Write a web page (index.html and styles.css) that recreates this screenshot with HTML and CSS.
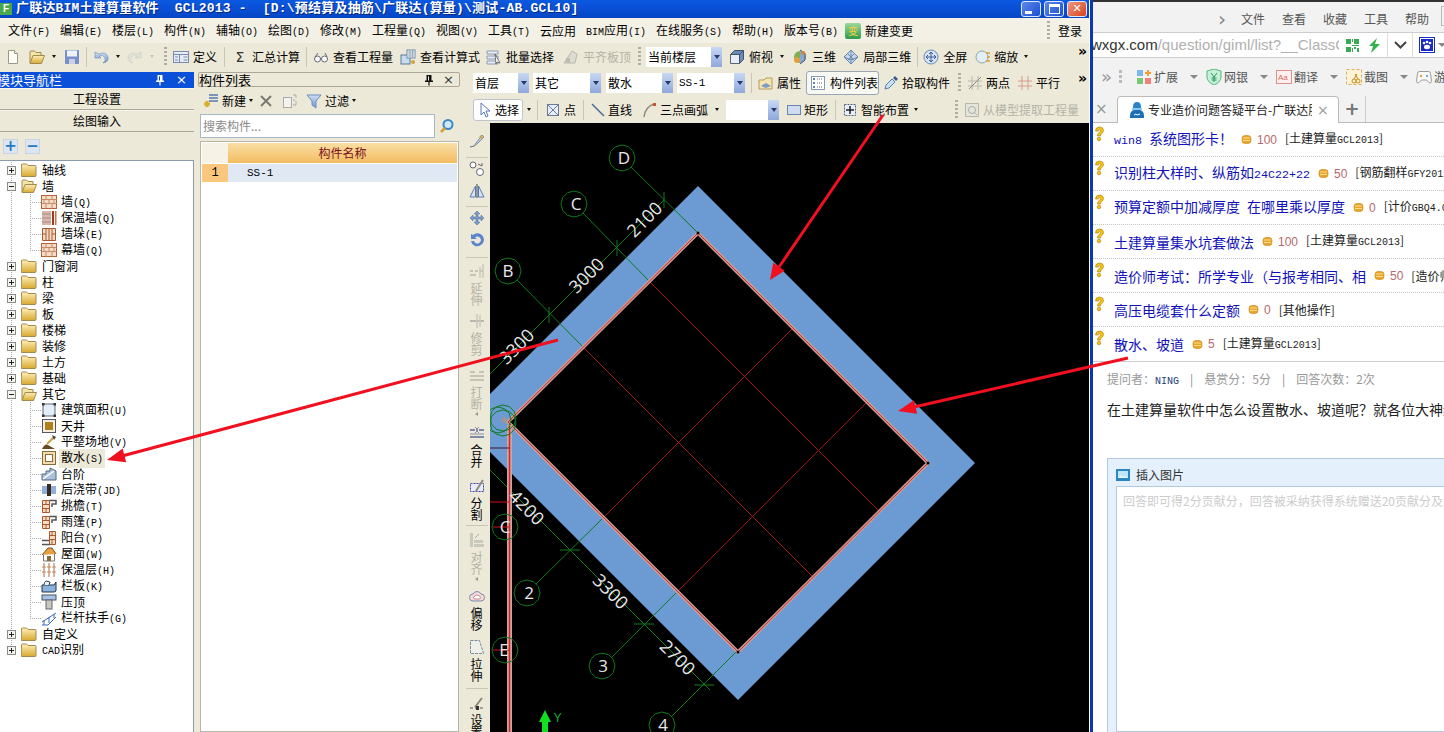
FILE: index.html
```html
<!DOCTYPE html>
<html lang="zh">
<head>
<meta charset="utf-8">
<title>广联达BIM土建算量软件</title>
<link rel="stylesheet" href="styles.css">
</head>
<body>
<svg class="defs" aria-hidden="true">
  <defs>
    <linearGradient id="gf" x1="0" y1="0" x2="0" y2="1"><stop offset="0" stop-color="#fdf0b8"/><stop offset="1" stop-color="#d9a830"/></linearGradient>
    <linearGradient id="gb" x1="0" y1="0" x2="0" y2="1"><stop offset="0" stop-color="#cfe0f5"/><stop offset="1" stop-color="#6f94cc"/></linearGradient>
    <symbol id="pinic" viewBox="0 0 10 12"><path d="M2.500 1h5v5.500H9V8H5.600v3.500H4.400V8H1V6.500h1.500zM4 2.200v4.300h1V2.200z" fill="currentColor" fill-rule="evenodd"/></symbol>
    <symbol id="plus" viewBox="0 0 9 9"><rect x=".5" y=".5" width="8" height="8" fill="#f4f4ee" stroke="#8a8a8a"/><path d="M2 4.500h5M4.500 2v5" stroke="#222"/></symbol>
    <symbol id="minus" viewBox="0 0 9 9"><rect x=".5" y=".5" width="8" height="8" fill="#f4f4ee" stroke="#8a8a8a"/><path d="M2 4.500h5" stroke="#222"/></symbol>
    <symbol id="folder" viewBox="0 0 16 16"><path d="M.5 4.500V3q0-1 1-1h4l1.500 1.500h7q1 0 1 1v9q0 1-1 1h-13q-1 0-1-1z" fill="url(#gf)" stroke="#a08a50"/></symbol>
    <symbol id="folderopen" viewBox="0 0 16 16"><path d="M1 14V3q0-1 1-1h3.500L7 3.500h5V6" fill="#f4e4a8" stroke="#a08a50"/><path d="M1 14.500 4 6.500h11.500L12.500 14.500z" fill="url(#gf)" stroke="#a08a50"/></symbol>
    <symbol id="brick" viewBox="0 0 16 16"><rect x=".5" y="1.500" width="15" height="13" fill="#f6dcc6" stroke="#b5613a"/><path d="M.5 5.500h15M.5 9.500h15M5 1.500v4M11 1.500v4M8 5.500v4M3 5.500v4M13 5.500v4M5 9.500v5M11 9.500v5" stroke="#c98a68" fill="none"/></symbol>
    <symbol id="insul" viewBox="0 0 16 16"><rect x="1" y="1" width="9" height="14" fill="#d8b8a8"/><path d="M1 4h9M1 8h9M1 12h9" stroke="#a88" /><rect x="11" y="1" width="2" height="14" fill="#a03820"/><rect x="14" y="1" width="1.500" height="14" fill="#d07040"/></symbol>
    <symbol id="pier" viewBox="0 0 16 16"><path d="M1.500 2.500h13v12h-13z" fill="#f6dcc6" stroke="#a8582e"/><path d="M5 2.500v12M11 2.500v12M8 2.500v12M1.500 8h3.500M11 8h3.500" stroke="#a8582e" fill="none"/></symbol>
    <symbol id="area" viewBox="0 0 16 16"><rect x="2" y="2" width="12" height="12" fill="#e4eef8" stroke="#667"/><rect x="1" y="1" width="2.500" height="2.500" fill="#333"/><rect x="12.500" y="1" width="2.500" height="2.500" fill="#333"/><rect x="1" y="12.500" width="2.500" height="2.500" fill="#333"/><rect x="12.500" y="12.500" width="2.500" height="2.500" fill="#333"/></symbol>
    <symbol id="well" viewBox="0 0 16 16"><rect x="1.500" y="1.500" width="13" height="13" fill="#f4eedc" stroke="#556"/><rect x="4" y="4" width="8" height="8" fill="#b08020"/></symbol>
    <symbol id="level" viewBox="0 0 16 16"><path d="M1 15q3-6 6-4l7 4z" fill="#6a4a24"/><path d="M6 10 13 3" stroke="#c8a040" stroke-width="2"/><path d="M11 1l4 2-2 3z" fill="#444"/></symbol>
    <symbol id="apron" viewBox="0 0 16 16"><rect x="1.500" y="1.500" width="13" height="13" fill="#f2dcae" stroke="#8a6a3a"/><rect x="4.500" y="4.500" width="7" height="7" fill="#fff" stroke="#8a6a3a"/></symbol>
    <symbol id="steps" viewBox="0 0 16 16"><path d="M1 14V8h4V5h4V2l6 3v9z" fill="#a9c0de" stroke="#567"/><path d="M2 13 13 5" stroke="#fff" stroke-width="1.500"/></symbol>
    <symbol id="band" viewBox="0 0 16 16"><rect x="1" y="4" width="5" height="8" fill="#8fb0dc"/><rect x="10" y="4" width="5" height="8" fill="#8fb0dc"/><rect x="6" y="2" width="4" height="12" fill="#3a2a20"/></symbol>
    <symbol id="eave" viewBox="0 0 16 16"><path d="M1.500 2.500h7v12h-7z" fill="#f6dcc6" stroke="#a8582e"/><path d="M1.500 6.500h7M1.500 10.500h7M5 2.500v4M5 10.500v4" stroke="#a8582e"/><path d="M8.500 2.500H15V6H11v3" fill="none" stroke="#555" stroke-width="1.500"/></symbol>
    <symbol id="balcony" viewBox="0 0 16 16"><path d="M8.500 1.500h6v13h-6z" fill="#f6dcc6" stroke="#a8582e"/><path d="M8.500 5.500h6M8.500 9.500h6M11 1.500v4M11 9.500v5" stroke="#a8582e"/><path d="M1 14.500h8M1 10.500h7" stroke="#555" stroke-width="1.500"/></symbol>
    <symbol id="roof" viewBox="0 0 16 16"><path d="M2.500 8v7h11V8" fill="#fff" stroke="#777"/><path d="M1 9 7 2h4l4 6" fill="#e8a040" stroke="#7a5020"/><rect x="6" y="10" width="4" height="5" fill="#8a6a3a"/></symbol>
    <symbol id="layer" viewBox="0 0 16 16"><path d="M3 1v14M8 1v14M13 1v14" stroke="#b06a40"/><path d="M1 5h4M6 5h4M11 5h4M1 10h4M6 10h4M11 10h4" stroke="#c88a5a"/></symbol>
    <symbol id="board" viewBox="0 0 16 16"><path d="M1 7h12l2-3v8q0 2-2 2H1z" fill="#8ab4de" stroke="#234"/><path d="M3 7q0-3 2-4l4 1-1 3" fill="#e8f2fa" stroke="#345"/></symbol>
    <symbol id="coping" viewBox="0 0 16 16"><rect x="1" y="1" width="14" height="5" fill="#a8c4e4" stroke="#456"/><rect x="5" y="6" width="6" height="9" fill="#c8c8c0" stroke="#667"/></symbol>
    <symbol id="rail" viewBox="0 0 16 16"><path d="M1 12 15 3M1 15h6l8-8M3 10v5M8 7v6M13 4v4" fill="none" stroke="#3a6ab8"/></symbol>
    <symbol id="newdoc" viewBox="0 0 16 16"><path d="M3.500 1.500h6l3 3v10h-9z" fill="#fffef6" stroke="#9a9a8c"/><path d="M9.500 1.500v3h3" fill="#eee" stroke="#9a9a8c"/></symbol>
    <symbol id="save" viewBox="0 0 16 16"><rect x="1" y="1" width="14" height="14" rx="1" fill="#7a8fc8"/><rect x="3" y="1.500" width="10" height="6" fill="#eef2fa"/><rect x="5" y="10" width="6" height="5" fill="#c8d0e4"/></symbol>
    <symbol id="undo" viewBox="0 0 16 16"><path d="M2 3v6h6L6 7q4-2 6 2 1 3-2 5 6-1 5-6-2-6-9-3z" fill="url(#gb)" stroke="#5a7ab0" stroke-width=".5"/></symbol>
    <symbol id="redo" viewBox="0 0 16 16"><path d="M14 3v6H8l2-2q-4-2-6 2-1 3 2 5-6-1-5-6 2-6 9-3z" fill="#dfe0d8" stroke="#c8c8bc" stroke-width=".5"/></symbol>
    <symbol id="table" viewBox="0 0 16 16"><rect x=".5" y="2.500" width="15" height="11" fill="#e4ecf8" stroke="#7a8ca8"/><path d="M.5 5.500h15M6.500 5.500v8M10.500 8h4M10.500 11h4M2 8h3M2 11h3" stroke="#7a8ca8"/></symbol>
    <symbol id="glasses" viewBox="0 0 16 16"><circle cx="4.500" cy="10" r="3" fill="#fff" stroke="#667"/><circle cx="11.500" cy="10" r="3" fill="#fff" stroke="#667"/><path d="M7.500 10h1M2 8l3-4M14 8l-2-4" stroke="#667" fill="none"/></symbol>
    <symbol id="calc" viewBox="0 0 16 16"><rect x="1" y="6" width="9" height="9" fill="#c8dcf0" stroke="#5a7a9a"/><rect x="7" y="1" width="8" height="8" fill="#fff" stroke="#6a8aa8"/><path d="M8 3h6M8 5h6M8 7h6M10 1v8M12.500 1v8" stroke="#9ab"/><circle cx="13" cy="13" r="2" fill="#d8a040"/></symbol>
    <symbol id="batch" viewBox="0 0 16 16"><path d="M1 2h11v3H1zM1 7h11v3H1zM1 12h11v3H1z" fill="#e8eef6" stroke="#8a9ab8"/><path d="M9 5l5 9-3-1-1 2z" fill="#fff" stroke="#444" stroke-width=".7"/></symbol>
    <symbol id="align" viewBox="0 0 16 16"><path d="M1 14 9 2l5 3-2 9z" fill="#dcdcd2" stroke="#b8b8ac"/><rect x="3" y="9" width="4" height="5" fill="#bcbcb0"/></symbol>
    <symbol id="cube" viewBox="0 0 16 16"><path d="M1.500 5.500h9v9h-9z" fill="#e8eef6" stroke="#567"/><path d="M1.500 5.500l4-4h9l-4 4zM10.500 5.500l4-4v9l-4 4z" fill="#6a8abc" stroke="#456"/></symbol>
    <symbol id="d3" viewBox="0 0 16 16"><circle cx="8" cy="8" r="6" fill="#7ab050"/><path d="M8 1l5 3v7l-5 4" fill="#88a8d8" stroke="#557"/><circle cx="5" cy="11" r="3" fill="#e0a040"/><circle cx="11" cy="4" r="2" fill="#c84"/></symbol>
    <symbol id="local3" viewBox="0 0 16 16"><path d="M8 1l7 7-7 7-7-7z" fill="#c8d8ec" stroke="#68a"/><path d="M1 8l7 3 7-3M8 1v14M4 4l7 7M12 4l-7 7" stroke="#68a" fill="none"/></symbol>
    <symbol id="full" viewBox="0 0 16 16"><circle cx="8" cy="8" r="7" fill="#d8e4f4" stroke="#6a8ab8"/><path d="M8 3v10M3 8h10M8 3l-2 2M8 3l2 2M8 13l-2-2M8 13l2-2M3 8l2-2M3 8l2 2M13 8l-2-2M13 8l-2 2" stroke="#3a5a98" fill="none"/></symbol>
    <symbol id="zoom" viewBox="0 0 16 16"><circle cx="7" cy="8" r="6" fill="#e4eef8" stroke="#8aa"/><path d="M11 4h4M12 8h3M11 12h4" stroke="#d8a030" stroke-width="1.500"/></symbol>
    <symbol id="prop" viewBox="0 0 16 16"><path d="M1 14V5h5l2-2h6v11z" fill="#f4e4b0" stroke="#b89a5a"/><path d="M3 11l5-3 5 3-5 2z" fill="#7a9ac8"/></symbol>
    <symbol id="listic" viewBox="0 0 16 16"><rect x="1.500" y="1.500" width="13" height="13" fill="#fff" stroke="#8a9ab0"/><path d="M3 4h2M3 8h2M3 12h2" stroke="#2a5aa8" stroke-width="1.500"/><path d="M7 4h6M7 8h6M7 12h6" stroke="#667" stroke-dasharray="1 1"/></symbol>
    <symbol id="dropper" viewBox="0 0 16 16"><path d="M2 14l1-4 6-6 3 3-6 6z" fill="#c8e0f4" stroke="#5a80b0"/><path d="M10 3l2-2 3 3-2 2z" fill="#3a5a90"/></symbol>
    <symbol id="twopt" viewBox="0 0 16 16"><path d="M5 1v14M11 1v14M1 6h14M1 11h14" stroke="#b8b8ac"/><path d="M2 14 14 2" stroke="#8a8a80"/></symbol>
    <symbol id="para" viewBox="0 0 16 16"><path d="M5 1v14M11 1v14M1 6h14M1 11h14" stroke="#d89a8a"/></symbol>
    <symbol id="cursor" viewBox="0 0 16 16"><path d="M5 1v12l3-3 2 5 2-1-2-5h4z" fill="#fff" stroke="#5a7ab8"/></symbol>
    <symbol id="pt" viewBox="0 0 16 16"><rect x="2.500" y="2.500" width="11" height="11" fill="#e8eef8" stroke="#6a7a98"/><path d="M2.500 2.500l11 11M13.500 2.500l-11 11" stroke="#6a7a98"/></symbol>
    <symbol id="line" viewBox="0 0 16 16"><path d="M2 2l12 12" stroke="#4a6a98" stroke-width="1.500"/></symbol>
    <symbol id="arc" viewBox="0 0 16 16"><path d="M3 15Q4 5 13 2" fill="none" stroke="#8a8a80" stroke-width="1.500"/><rect x="12" y="1" width="3" height="3" fill="#d05030"/></symbol>
    <symbol id="rect" viewBox="0 0 16 16"><rect x="1.500" y="3.500" width="13" height="9" fill="#cfdcf0" stroke="#6a86b0"/></symbol>
    <symbol id="smart" viewBox="0 0 16 16"><rect x="2.500" y="2.500" width="11" height="11" fill="#e8eef8" stroke="#567" stroke-dasharray="2 1"/><path d="M8 4v8M4 8h8" stroke="#222" stroke-width="1.500"/></symbol>
    <symbol id="extract" viewBox="0 0 16 16"><rect x="1.500" y="1.500" width="13" height="13" fill="#e4e4da" stroke="#b8b8ac"/><circle cx="8" cy="8" r="3.500" fill="none" stroke="#aaa"/><path d="M10 10l3 3" stroke="#aaa"/></symbol>
    <symbol id="newitem" viewBox="0 0 16 16"><path d="M6 2h9M6 5h9M6 8h9" stroke="#5a7ab0" stroke-width="1.500"/><path d="M4 8v6M1 11h6" stroke="#d8b030" stroke-width="3"/></symbol>
    <symbol id="del" viewBox="0 0 16 16"><path d="M3 3l10 10M13 3 3 13" stroke="#7a7a70" stroke-width="2"/></symbol>
    <symbol id="copy" viewBox="0 0 16 16"><rect x="1.500" y="4.500" width="8" height="10" fill="#f4f4ec" stroke="#aaa"/><path d="M11 2h3v3M11 12h3V8M11 7h2" fill="none" stroke="#aaa"/></symbol>
    <symbol id="filter" viewBox="0 0 16 16"><path d="M1 2h14l-5 6v7l-4-3V8z" fill="url(#gb)" stroke="#6a90c0"/></symbol>
    <symbol id="search" viewBox="0 0 16 16"><circle cx="9" cy="6.500" r="4.500" fill="#cfe8f8" stroke="#3a88c8" stroke-width="2"/><path d="M6 10l-4 4" stroke="#d8a030" stroke-width="2.500"/></symbol>
    <symbol id="brush" viewBox="0 0 16 16"><path d="M1 14q5 0 6-4l6-8 2 2-7 7q-3 3-7 3z" fill="#b8c8e0" stroke="#567" stroke-width=".6"/><path d="M11 3l2 2" stroke="#d8a030" stroke-width="2"/></symbol>
    <symbol id="copymove" viewBox="0 0 16 16"><circle cx="4" cy="4" r="3" fill="#fff" stroke="#667"/><circle cx="11" cy="11" r="3.500" fill="#fff" stroke="#667"/><path d="M9 3l4 2M13 2v3" stroke="#667" fill="none"/></symbol>
    <symbol id="mirror" viewBox="0 0 16 16"><path d="M8 1v14" stroke="#345"/><path d="M6.500 3v11H1zM9.500 3v11H15z" fill="#d8e4f4" stroke="#5a7ab0"/></symbol>
    <symbol id="move" viewBox="0 0 16 16"><path d="M8 1l3 3H9v3h3V5l3 3-3 3V9H9v3h2l-3 3-3-3h2V9H4v2L1 8l3-3v2h3V4H5z" fill="#7a9ac8" stroke="#4a6a98" stroke-width=".5"/></symbol>
    <symbol id="rotate" viewBox="0 0 16 16"><path d="M4 2a6.500 6.500 0 1 1-2 6h3a3.500 3.500 0 1 0 1-3.500L8 6H2V1z" fill="#5a84cc"/></symbol>
    <symbol id="extend" viewBox="0 0 16 16"><path d="M1 8h3M6 8h3M11 8h3M1 12h6" stroke="#b8b8ac" stroke-width="1.500"/><path d="M14 1v14M11 4v11" stroke="#c8c8bc" stroke-width="1.500"/></symbol>
    <symbol id="trim" viewBox="0 0 16 16"><path d="M1 8h14" stroke="#b8b8ac" stroke-width="2"/><path d="M8 1v14M11 2v12" stroke="#c8c8bc" stroke-width="1.500"/></symbol>
    <symbol id="breakic" viewBox="0 0 16 16"><path d="M1 5h5M10 5h5M1 13h14M1 9h14" stroke="#b8b8ac" stroke-width="1.500"/></symbol>
    <symbol id="merge" viewBox="0 0 16 16"><path d="M1 5h5M10 5h5M1 12h14" stroke="#5a6a98" stroke-width="1.500"/><path d="M6 2l3 3-3 3M10 2 7 5l3 3" stroke="#88a" fill="none"/><path d="M1 9h14" stroke="#aab" stroke-width="1.500"/></symbol>
    <symbol id="split" viewBox="0 0 16 16"><rect x="1.500" y="5.500" width="13" height="8" fill="#e8ecf8" stroke="#4040b0" stroke-dasharray="2 1"/><path d="M7 13 14 2" stroke="#8a8a80" stroke-width="2"/></symbol>
    <symbol id="alignv" viewBox="0 0 16 16"><rect x="1" y="1" width="3" height="14" fill="#c8c8bc"/><rect x="5" y="8" width="9" height="3" fill="#c8c8bc"/><rect x="5" y="12" width="10" height="3" fill="#c8c8bc"/><path d="M10 2 6 6" stroke="#aaa"/></symbol>
    <symbol id="offset" viewBox="0 0 16 16"><path d="M4 13a3.500 3.500 0 0 1 0-7 4.500 4.500 0 0 1 8 0 3.500 3.500 0 0 1 0 7z" fill="#f4dcdc" stroke="#7a8ab0"/><path d="M6 11a1.500 1.500 0 0 1 0-3 2.500 2.500 0 0 1 4 0 1.500 1.500 0 0 1 0 3z" fill="#fff" stroke="#c88"/></symbol>
    <symbol id="stretch" viewBox="0 0 16 16"><path d="M1.500 1.500h9l4 13h-13z" fill="#f0f0ea" stroke="#7a8a98" stroke-dasharray="3 1"/></symbol>
    <symbol id="setting" viewBox="0 0 16 16"><path d="M1 13h14" stroke="#555" stroke-dasharray="3 2"/><path d="M6 12 13 3" stroke="#8a8a80" stroke-width="2"/><rect x="7" y="11" width="3" height="4" fill="#333"/></symbol>
    <symbol id="qmark" viewBox="0 0 11 16"><path d="M1.500 5Q1.500 1 5.500 1t4 3.500q0 2-2 3.200-1 .8-1 2.300H3.500q0-2.300 1.600-3.500 1.300-1 1.300-2 0-1.200-1-1.200T4.500 5z" fill="#f2c414" stroke="#a87a08" stroke-width=".6"/><circle cx="5" cy="13" r="1.800" fill="#f2c414" stroke="#a87a08" stroke-width=".6"/></symbol>
    <symbol id="coin" viewBox="0 0 11 11"><rect x="1" y="1.500" width="9" height="8" rx="3" fill="#e8a52a" stroke="#c8861a" stroke-width=".6"/><path d="M2 4h7M2 6.500h7" stroke="#ffe090"/></symbol>
  </defs>
</svg>

<div class="desk">
  <section class="app">
    <header class="title">
      <span class="applogo">F</span>
      <h1 class="title-text">广联达BIM土建算量软件  GCL2013 -  [D:\预结算及抽筋\广联达(算量)\测试-AB.GCL10]</h1>
      <div class="winbtns">
        <span class="wb"><i class="wb-min"></i></span>
        <span class="wb"><i class="wb-max"></i></span>
        <span class="wb wb-close">✕</span>
      </div>
    </header>

    <nav class="menubar">
      <span>文件<span class="m">(F)</span></span>
      <span>编辑<span class="m">(E)</span></span>
      <span>楼层<span class="m">(L)</span></span>
      <span>构件<span class="m">(N)</span></span>
      <span>辅轴<span class="m">(O)</span></span>
      <span>绘图<span class="m">(D)</span></span>
      <span>修改<span class="m">(M)</span></span>
      <span>工程量<span class="m">(Q)</span></span>
      <span>视图<span class="m">(V)</span></span>
      <span>工具<span class="m">(T)</span></span>
      <span>云应用</span>
      <span><span class="m">BIM</span>应用<span class="m">(I)</span></span>
      <span>在线服务<span class="m">(S)</span></span>
      <span>帮助<span class="m">(H)</span></span>
      <span>版本号<span class="m">(B)</span></span>
      <span class="change"><span class="changeic">变</span>新建变更</span>
      <span class="menu-end"><i class="grip"></i>登录</span>
    </nav>

    <div class="tb tb-main">
      <svg class="ic"><use href="#newdoc"/></svg>
      <svg class="ic ml8"><use href="#folderopen"/></svg>
      <i class="caret ml7"></i>
      <svg class="ic ml8"><use href="#save"/></svg>
      <i class="sep ml6"></i>
      <svg class="ic ml6"><use href="#undo"/></svg>
      <i class="caret ml7"></i>
      <svg class="ic ml7"><use href="#redo"/></svg>
      <i class="caret off ml7"></i>
      <i class="grip ml10"></i>
      <span class="ti g4 ml6"><svg class="ic"><use href="#table"/></svg>定义</span>
      <i class="sep ml7"></i>
      <span class="ti g4 ml7"><b class="sigma">Σ</b>汇总计算</span>
      <i class="sep ml6"></i>
      <span class="ti g4 ml6"><svg class="ic"><use href="#glasses"/></svg>查看工程量</span>
      <span class="ti g4 ml7"><svg class="ic"><use href="#calc"/></svg>查看计算式</span>
      <span class="ti g4 ml6"><svg class="ic"><use href="#batch"/></svg>批量选择</span>
      <span class="ti g4 ml9 dis"><svg class="ic"><use href="#align"/></svg>平齐板顶</span>
      <i class="grip ml7"></i>
      <span class="combo ml5 w76">当前楼层</span>
      <span class="ti g4 ml7"><svg class="ic"><use href="#cube"/></svg>俯视</span>
      <i class="caret ml7"></i>
      <span class="ti g4 ml8"><svg class="ic"><use href="#d3"/></svg>三维</span>
      <span class="ti g4 ml7"><svg class="ic"><use href="#local3"/></svg>局部三维</span>
      <i class="sep ml6"></i>
      <span class="ti g4 ml5"><svg class="ic"><use href="#full"/></svg>全屏</span>
      <span class="ti g3 ml8"><svg class="ic"><use href="#zoom"/></svg>缩放</span>
      <i class="caret ml6"></i>
      <b class="more">»</b>
    </div>

    <div class="work">
      <aside class="nav">
        <div class="nav-title"><span class="nav-name">模块导航栏</span><svg class="pin"><use href="#pinic"/></svg><span class="cl">×</span></div>
        <button class="navbtn">工程设置</button>
        <button class="navbtn">绘图输入</button>
        <div class="nav-tools"><span class="sq">+</span><span class="sq">−</span></div>
        <div class="tree">
          <div class="node"><svg class="exp"><use href="#plus"/></svg><svg class="ic"><use href="#folder"/></svg><span>轴线</span></div>
          <div class="node"><svg class="exp"><use href="#minus"/></svg><svg class="ic"><use href="#folderopen"/></svg><span>墙</span></div>
          <div class="node child"><svg class="ic"><use href="#brick"/></svg><span>墙<span class="m">(Q)</span></span></div>
          <div class="node child"><svg class="ic"><use href="#insul"/></svg><span>保温墙<span class="m">(Q)</span></span></div>
          <div class="node child"><svg class="ic"><use href="#pier"/></svg><span>墙垛<span class="m">(E)</span></span></div>
          <div class="node child lastc"><svg class="ic"><use href="#brick"/></svg><span>幕墙<span class="m">(Q)</span></span></div>
          <div class="node"><svg class="exp"><use href="#plus"/></svg><svg class="ic"><use href="#folder"/></svg><span>门窗洞</span></div>
          <div class="node"><svg class="exp"><use href="#plus"/></svg><svg class="ic"><use href="#folder"/></svg><span>柱</span></div>
          <div class="node"><svg class="exp"><use href="#plus"/></svg><svg class="ic"><use href="#folder"/></svg><span>梁</span></div>
          <div class="node"><svg class="exp"><use href="#plus"/></svg><svg class="ic"><use href="#folder"/></svg><span>板</span></div>
          <div class="node"><svg class="exp"><use href="#plus"/></svg><svg class="ic"><use href="#folder"/></svg><span>楼梯</span></div>
          <div class="node"><svg class="exp"><use href="#plus"/></svg><svg class="ic"><use href="#folder"/></svg><span>装修</span></div>
          <div class="node"><svg class="exp"><use href="#plus"/></svg><svg class="ic"><use href="#folder"/></svg><span>土方</span></div>
          <div class="node"><svg class="exp"><use href="#plus"/></svg><svg class="ic"><use href="#folder"/></svg><span>基础</span></div>
          <div class="node"><svg class="exp"><use href="#minus"/></svg><svg class="ic"><use href="#folderopen"/></svg><span>其它</span></div>
          <div class="node child"><svg class="ic"><use href="#area"/></svg><span>建筑面积<span class="m">(U)</span></span></div>
          <div class="node child"><svg class="ic"><use href="#well"/></svg><span>天井</span></div>
          <div class="node child"><svg class="ic"><use href="#level"/></svg><span>平整场地<span class="m">(V)</span></span></div>
          <div class="node child sel"><svg class="ic"><use href="#apron"/></svg><span>散水<span class="m">(S)</span></span></div>
          <div class="node child"><svg class="ic"><use href="#steps"/></svg><span>台阶</span></div>
          <div class="node child"><svg class="ic"><use href="#band"/></svg><span>后浇带<span class="m">(JD)</span></span></div>
          <div class="node child"><svg class="ic"><use href="#eave"/></svg><span>挑檐<span class="m">(T)</span></span></div>
          <div class="node child"><svg class="ic"><use href="#eave"/></svg><span>雨篷<span class="m">(P)</span></span></div>
          <div class="node child"><svg class="ic"><use href="#balcony"/></svg><span>阳台<span class="m">(Y)</span></span></div>
          <div class="node child"><svg class="ic"><use href="#roof"/></svg><span>屋面<span class="m">(W)</span></span></div>
          <div class="node child"><svg class="ic"><use href="#layer"/></svg><span>保温层<span class="m">(H)</span></span></div>
          <div class="node child"><svg class="ic"><use href="#board"/></svg><span>栏板<span class="m">(K)</span></span></div>
          <div class="node child"><svg class="ic"><use href="#coping"/></svg><span>压顶</span></div>
          <div class="node child lastc"><svg class="ic"><use href="#rail"/></svg><span>栏杆扶手<span class="m">(G)</span></span></div>
          <div class="node"><svg class="exp"><use href="#plus"/></svg><svg class="ic"><use href="#folder"/></svg><span>自定义</span></div>
          <div class="node lastr"><svg class="exp"><use href="#plus"/></svg><svg class="ic"><use href="#folder"/></svg><span><span class="m">CAD</span>识别</span></div>
        </div>
      </aside>

      <aside class="list">
        <div class="list-title"><span class="list-name">构件列表</span><svg class="pin dark"><use href="#pinic"/></svg><span class="cl dark">×</span></div>
        <div class="list-tools">
          <span class="ti"><svg class="ic"><use href="#newitem"/></svg>新建</span><i class="caret ml3"></i>
          <svg class="ic ml5"><use href="#del"/></svg>
          <svg class="ic ml8"><use href="#copy"/></svg>
          <span class="ti ml8"><svg class="ic"><use href="#filter"/></svg>过滤</span><i class="caret ml3"></i>
        </div>
        <div class="searchrow"><div class="searchbox">搜索构件...</div><svg class="ic searchic"><use href="#search"/></svg></div>
        <div class="grid">
          <div class="gh"><span class="gn"></span><span class="gt">构件名称</span></div>
          <div class="gr"><span class="gn gnum">1</span><span class="gc">SS-1</span></div>
        </div>
      </aside>

      <main class="draw">
        <div class="tb tb3">
          <span class="combo w56">首层</span>
          <span class="combo ml4 w68">其它</span>
          <span class="combo ml5 w67">散水</span>
          <span class="combo ml4 w68 mono">SS-1</span>
          <i class="sep ml6"></i>
          <span class="ti ml6"><svg class="ic"><use href="#prop"/></svg>属性</span>
          <span class="ti toggled ml5"><svg class="ic"><use href="#listic"/></svg>构件列表</span>
          <span class="ti ml4"><svg class="ic"><use href="#dropper"/></svg>拾取构件</span>
          <i class="grip ml8"></i>
          <span class="ti ml6"><svg class="ic"><use href="#twopt"/></svg>两点</span>
          <span class="ti ml7"><svg class="ic"><use href="#para"/></svg>平行</span>
          <b class="more">»</b>
        </div>
        <div class="tb tb4">
          <span class="ti selbtn"><svg class="ic"><use href="#cursor"/></svg>选择</span>
          <i class="caret ml4"></i>
          <i class="sep ml6"></i>
          <span class="ti ml7"><svg class="ic"><use href="#pt"/></svg>点</span>
          <i class="sep ml7"></i>
          <span class="ti g2 ml6"><svg class="ic"><use href="#line"/></svg>直线</span>
          <span class="ti ml9"><svg class="ic"><use href="#arc"/></svg>三点画弧</span>
          <i class="caret ml7"></i>
          <span class="combo ml7 w53"></span>
          <span class="ti g2 ml7"><svg class="ic"><use href="#rect"/></svg>矩形</span>
          <i class="sep ml7"></i>
          <span class="ti ml6"><svg class="ic"><use href="#smart"/></svg>智能布置</span>
          <i class="caret ml5"></i>
          <i class="grip ml37"></i>
          <span class="ti ml6 dis"><svg class="ic"><use href="#extract"/></svg>从模型提取工程量</span>
        </div>
        <div class="stage">
          <div class="vbar">
            <svg class="ic"><use href="#brush"/></svg>
            <i class="hsep mt8"></i>
            <svg class="ic mt3"><use href="#copymove"/></svg>
            <svg class="ic mt6"><use href="#mirror"/></svg>
            <i class="hsep mt7"></i>
            <svg class="ic mt3"><use href="#move"/></svg>
            <svg class="ic mt7"><use href="#rotate"/></svg>
            <i class="hsep mt8"></i>
            <span class="vt dis mt5"><svg class="ic"><use href="#extend"/></svg>延伸</span>
            <span class="vt dis mt7"><svg class="ic"><use href="#trim"/></svg>修剪</span>
            <span class="vt dis mt11"><svg class="ic"><use href="#breakic"/></svg>打断</span>
            <i class="lcaret mt2"></i>
            <span class="vt mt9"><svg class="ic"><use href="#merge"/></svg>合并</span>
            <span class="vt mt10"><svg class="ic"><use href="#split"/></svg>分割</span>
            <i class="hsep mt4"></i>
            <span class="vt dis mt6"><svg class="ic"><use href="#alignv"/></svg>对齐</span>
            <i class="lcaret mt2"></i>
            <span class="vt mt7"><svg class="ic"><use href="#offset"/></svg>偏移</span>
            <span class="vt mt8"><svg class="ic"><use href="#stretch"/></svg>拉伸</span>
            <i class="hsep mt6"></i>
            <span class="vt mt6"><svg class="ic"><use href="#setting"/></svg>设置</span>
          </div>
          <div class="canvas">
            <svg class="cad" viewBox="490 123 599 609" width="599" height="609">
              <defs>
                <polygon id="oct" points="13,0 11.300,6.500 6.500,11.300 0,13 -6.500,11.300 -11.300,6.500 -13,0 -11.300,-6.500 -6.500,-11.300 0,-13 6.500,-11.300 11.300,-6.500" fill="none" stroke="#0f7a1e"/>
              </defs>
              <path class="band" fill-rule="evenodd" d="M698 186 975 463 738 700 461 423 Z M698 233 508 422 738 652 928 463 Z"/>
              <g class="axis">
                <path d="M631 167 698 233M583 213 651 283M517 280 584 348"/>
                <path d="M490 374 664 200"/>
                <path d="M664 192v16M617 240v16M549 307v16"/>
                <path d="M536 584 605 516M611 658 678 591M671 717 738 650"/>
                <path d="M490 470 710 690"/>
                <path d="M560 550h20M634 624h20M694 685h20"/>
              </g>
              <g class="grid-r">
                <path d="M650 282 879 511M584 348 813 577M604 517 793 328M678 591 867 402"/>
              </g>
              <path class="wall" d="M698 233 508 422 738 652 928 463Z"/>
              <path class="wallr" d="M698 233 508 422 738 652 928 463Z"/>
              <path class="vwall" d="M509.500 425V732"/>
              <path class="vwallr" d="M509.500 425V732"/>
              <path class="stub" d="M490 502h19M493 527h16M493 650h16"/>
              <path class="stubd" d="M490 448h19"/>
              <circle cx="698" cy="233" r="1.500"/><circle cx="928" cy="463" r="1.500"/><circle cx="738" cy="652" r="1.500"/>
              <use href="#oct" x="622" y="158"/><use href="#oct" x="574" y="204"/><use href="#oct" x="508" y="271"/>
              <use href="#oct" x="527" y="593"/><use href="#oct" x="602" y="666"/><use href="#oct" x="662" y="725"/>
              <use href="#oct" x="505" y="527"/><use href="#oct" x="505" y="650"/>
              <use href="#oct" x="503" y="418"/><use href="#oct" x="503" y="423"/><use href="#oct" x="498" y="420"/>
              <circle class="node-g" cx="504" cy="420" r="3"/>
              <g class="lbl">
                <text x="624" y="164">D</text><text x="576" y="210">C</text><text x="508" y="277">B</text>
                <text x="529" y="599">2</text><text x="603" y="672">3</text><text x="663" y="731">4</text>
                <text x="505" y="533">C</text><text x="504" y="656">E</text>
                <text class="dim" transform="translate(649 224) rotate(-45)">2100</text>
                <text class="dim" transform="translate(591 280) rotate(-45)">3000</text>
                <text class="dim" transform="translate(521 351) rotate(-45)">3300</text>
                <text class="dim" transform="translate(522 512) rotate(45)">4200</text>
                <text class="dim" transform="translate(606 596) rotate(45)">3300</text>
                <text class="dim" transform="translate(673 662) rotate(45)">2700</text>
              </g>
              <path class="yarrow" d="M545 710l6 12h-3v10h-6v-10h-3z"/>
              <text class="ylab" x="554" y="722">Y</text>
            </svg>
          </div>
        </div>
      </main>
    </div>
  </section>

  <section class="browser">
    <div class="b-menu">
      <span class="chev">›</span><span>文件</span><span>查看</span><span>收藏</span><span>工具</span><span>帮助</span><i class="b-menu-end"></i>
    </div>
    <div class="b-addr">
      <div class="url"><span class="host">wxgx.com</span>/question/giml/list?__ClassCode=1</div>
      <svg class="b-ic qr" viewBox="0 0 13 13"><path d="M0 0h5v5H0zM8 0h5v5H8zM0 8h5v5H0zM6 0h1v3H6zM6 6h7v1H6zM8 8h2v2H8zM11 9h2v4h-2zM6 9h1v4H6z" fill="#3aa856"/></svg>
      <svg class="b-ic bolt" viewBox="0 0 13 15"><path d="M9 0 1 8h4l-2 7 9-9H7z" fill="#34b24a"/></svg>
      <i class="vline"></i>
      <svg class="b-ic down" viewBox="0 0 13 8"><path d="M1 1l5.500 5.500L12 1" fill="none" stroke="#444" stroke-width="2"/></svg>
      <i class="vline"></i>
      <svg class="b-ic paw" viewBox="0 0 16 16"><rect x=".5" y=".5" width="15" height="15" fill="#fff" stroke="#1a2ac8"/><rect x="2" y="2" width="12" height="12" fill="#1a2ac8"/><circle cx="5" cy="6" r="1.300" fill="#fff"/><circle cx="8" cy="5" r="1.300" fill="#fff"/><circle cx="11" cy="6" r="1.300" fill="#fff"/><ellipse cx="8" cy="10" rx="3" ry="2.200" fill="#fff"/></svg>
      <i class="caret g"></i>
    </div>
    <div class="b-tools">
      <span class="dbl">»</span><i class="dots"></i>
      <span class="bt"><svg class="b-ic" viewBox="0 0 16 16"><rect x="1" y="1" width="6" height="6" fill="#7ab8f0"/><rect x="1" y="9" width="6" height="6" fill="#78c878"/><rect x="9" y="9" width="6" height="6" fill="#f08080"/><path d="M12 1v6M9 4h6" stroke="#f0a030" stroke-width="2"/></svg>扩展<i class="caret g"></i></span>
      <span class="bt"><svg class="b-ic" viewBox="0 0 16 16"><path d="M8 0l7 2v6q0 5-7 8-7-3-7-8V2z" fill="#c8f0d8" stroke="#50b878"/><path d="M5 4l3 4 3-4M8 8v5M5.500 9h5M5.500 11h5" stroke="#2a9858" fill="none"/></svg>网银<i class="caret g"></i></span>
      <span class="bt"><svg class="b-ic" viewBox="0 0 16 16"><rect x=".5" y="1.500" width="15" height="13" fill="#fdf0ee" stroke="#e09088"/><text class="aa" x="2" y="11">Aa</text></svg>翻译<i class="caret g"></i></span>
      <span class="bt"><svg class="b-ic" viewBox="0 0 16 16"><rect x=".5" y=".5" width="15" height="15" fill="#fdf4d8" stroke="#d8b060" stroke-dasharray="3 2"/><circle cx="8" cy="12" r="2" fill="none" stroke="#c88a20"/><circle cx="12" cy="12" r="2" fill="none" stroke="#c88a20"/><path d="M8 10l3-5M12 10 9 5" stroke="#c88a20"/></svg>截图<i class="caret g"></i></span>
      <span class="bt"><svg class="b-ic" viewBox="0 0 16 16"><path d="M1.500 4.500q0-2 2-2h9q2 0 2 2l1 8q0 1.500-2 1.500l-3-3h-5l-3 3q-2 0-2-1.500z" fill="#fafafa" stroke="#999"/><circle cx="5" cy="7" r="1.200" fill="#e8a040"/><circle cx="11" cy="7" r="1.200" fill="#70b0e0"/></svg>游戏</span>
    </div>
    <div class="b-tabs">
      <span class="tabx">×</span>
      <div class="tab">
        <svg class="favicon" viewBox="0 0 16 16"><path d="M8 0q4 0 4 5v1H4V5q0-5 4-5z" fill="#2a82c8"/><rect x="3" y="6" width="10" height="2" fill="#88c8ee"/><path d="M1 14q0-5 4-6h6q4 1 4 6v2H1z" fill="#1c70b8"/><path d="M5 13l2-1 1 1 3-1" stroke="#fff" fill="none"/></svg>
        <span class="tabtext">专业造价问题答疑平台-广联达服</span>
        <span class="tabclose">×</span>
      </div>
      <span class="tabplus">+</span><i class="tabsep"></i>
    </div>
    <div class="b-page">
      <ul class="qlist">
        <li class="q"><svg class="qm"><use href="#qmark"/></svg><a><span class="m">win8 </span>系统图形卡！</a><svg class="coin"><use href="#coin"/></svg><span class="pts">100</span><span class="tag">[土建算量<span class="m">GCL2013</span>]</span></li>
        <li class="q"><svg class="qm"><use href="#qmark"/></svg><a>识别柱大样时、纵筋如<span class="m">24C22+22</span></a><svg class="coin"><use href="#coin"/></svg><span class="pts">50</span><span class="tag">[钢筋翻样<span class="m">GFY2012</span>]</span></li>
        <li class="q"><svg class="qm"><use href="#qmark"/></svg><a>预算定额中加减厚度<span class="m"> </span>在哪里乘以厚度</a><svg class="coin"><use href="#coin"/></svg><span class="pts">0</span><span class="tag">[计价<span class="m">GBQ4.0</span>]</span></li>
        <li class="q"><svg class="qm"><use href="#qmark"/></svg><a>土建算量集水坑套做法</a><svg class="coin"><use href="#coin"/></svg><span class="pts">100</span><span class="tag">[土建算量<span class="m">GCL2013</span>]</span></li>
        <li class="q"><svg class="qm"><use href="#qmark"/></svg><a>造价师考试：所学专业（与报考相同、相</a><svg class="coin"><use href="#coin"/></svg><span class="pts">50</span><span class="tag">[造价师考试]</span></li>
        <li class="q"><svg class="qm"><use href="#qmark"/></svg><a>高压电缆套什么定额</a><svg class="coin"><use href="#coin"/></svg><span class="pts">0</span><span class="tag">[其他操作]</span></li>
        <li class="q qlast"><svg class="qm"><use href="#qmark"/></svg><a>散水、坡道</a><svg class="coin"><use href="#coin"/></svg><span class="pts">5</span><span class="tag">[土建算量<span class="m">GCL2013</span>]</span></li>
      </ul>
      <div class="meta">提问者：<b class="m asker">NING</b><i class="bar">|</i>悬赏分：5分<i class="bar">|</i>回答次数：2次</div>
      <p class="body">在土建算量软件中怎么设置散水、坡道呢？就各位大神给解答一下，谢谢！</p>
      <div class="answer">
        <div class="answer-head"><svg class="imgic" viewBox="0 0 14 12"><rect width="14" height="12" fill="#2a88c0"/><rect x="2" y="2" width="10" height="7" fill="#bfe6f6"/><path d="M2 9l3-3 2 2 2-1 3 2z" fill="#e8f6fa"/></svg>插入图片</div>
        <div class="answer-box">回答即可得2分贡献分，回答被采纳获得系统赠送20贡献分及悬赏分</div>
      </div>
    </div>
  </section>

  <svg class="arrows" viewBox="0 0 1444 732" width="1444" height="732" aria-hidden="true">
    <path d="M883 115 777 270M558 340 122 456M1128 358 914 407"/>
    <polygon points="770,280 784.800,270.800 773.200,262.800"/>
    <polygon points="107,460 126.200,462.200 122.600,448.600"/>
    <polygon points="898,411 917.100,413.800 913.900,400.200"/>
  </svg>
</div>
</body>
</html>
```

FILE: styles.css
```css
* { box-sizing: border-box; }
html, body { margin: 0; padding: 0; }
body {
  width: 1444px; height: 732px; overflow: hidden; background: #fff; color: #000;
  font: 12px/16px "Noto Sans CJK SC", "Liberation Sans", sans-serif;
}
i { font-style: normal; }
.defs { position: absolute; width: 0; height: 0; }
.m { font-family: "Liberation Mono", monospace; font-size: .833em; font-weight: normal; }
.mono { font-family: "Liberation Mono", monospace; font-size: 11px; }
.desk { position: relative; display: flex; width: 1444px; height: 732px; overflow: hidden; }

/* ------ desktop application ------ */
.app { width: 1090px; height: 732px; display: flex; flex-direction: column; background: #ece9d8; border-right: 1px solid #fff; overflow: hidden; }
.title { height: 18px; flex: none; display: flex; align-items: center; color: #fff;
  background: linear-gradient(#0a5ae0, #0a50d8 40%, #0446c4); }
.applogo { width: 12px; height: 12px; margin: 0 4px 0 0; background: #4aa84a; color: #fff; font: bold 10px/12px "Liberation Sans", sans-serif; text-align: center; }
.title-text { margin: 0; flex: 1; white-space: pre; overflow: hidden; letter-spacing: .2px; font: bold 13px/18px "Liberation Mono", "Noto Sans CJK SC", monospace; text-shadow: 1px 1px #022a80; }
.winbtns { display: flex; gap: 3px; padding-right: 2px; }
.wb { width: 20px; height: 16px; border: 1px solid #dfe8fb; border-radius: 3px; background: linear-gradient(135deg, #5c88ea, #1d4fd0); display: flex; align-items: center; justify-content: center; color: #fff; font: bold 11px/14px "DejaVu Sans", sans-serif; }
.wb-close { background: linear-gradient(135deg, #ee9a80, #d8401c); }
.wb-min { width: 7px; height: 3px; background: #fff; margin-top: 7px; margin-right: 5px; }
.wb-max { width: 11px; height: 10px; border: 1px solid #fff; border-top-width: 3px; }

.menubar { height: 25px; flex: none; display: flex; align-items: center; gap: 10px; padding: 1px 0 0 8px; background: #f3f1e6; white-space: nowrap; }
.change { display: flex; align-items: center; gap: 4px; margin-left: -3px; }
.changeic { width: 16px; height: 16px; background: linear-gradient(#9ad89a, #2f9a4c); color: #f8d040; font-size: 10px; line-height: 16px; text-align: center; border-radius: 2px; }
.menu-end { display: flex; align-items: center; gap: 8px; margin-left: auto; padding-right: 7px; height: 24px; }

.tb { height: 27px; flex: none; display: flex; align-items: center; white-space: nowrap; background: #ece9d8; position: relative; }
.tb-main { padding-left: 5px; }
.tb3 { padding-left: 12px; height: 26px; }
.tb4 { padding-left: 12px; }
.ic { width: 16px; height: 16px; flex: none; }
.ti { display: inline-flex; align-items: center; gap: 3px; }
.g2 { gap: 2px; } .g3 { gap: 3px; } .g4 { gap: 4px; }
.dis { color: #b4b2a6; }
.sigma { width: 16px; text-align: center; font: 14px/16px "DejaVu Sans", sans-serif; color: #333; }
.caret { width: 0; height: 0; flex: none; border: 2.500px solid transparent; border-top: 3px solid #111; border-bottom: 0; }
.caret.off { border-top-color: #c4c2b4; }
.caret.g { border-top-color: #888; border-width: 4px 4px 0; }
.sep { width: 1px; height: 20px; flex: none; background: #c9c6b4; }
.grip { width: 3px; height: 20px; flex: none; background: repeating-linear-gradient(#b0ae9c 0 2px, transparent 2px 4px); }
.more { position: absolute; right: 2px; top: 1px; font: bold 14px/14px "DejaVu Sans", sans-serif; }
.combo { height: 20px; flex: none; position: relative; background: #fff; padding: 0 14px 0 2px; line-height: 20px; }
.combo::after { content: ""; position: absolute; right: 0; top: 0; width: 11px; height: 20px; background: linear-gradient(#c8d8f4, #8fa8dc); }
.combo::before { content: ""; position: absolute; z-index: 1; right: 2px; top: 8px; border: 3.500px solid transparent; border-top: 4px solid #2a3a68; border-bottom: 0; }
.w53 { width: 53px; } .w56 { width: 56px; } .w67 { width: 67px; } .w68 { width: 68px; } .w76 { width: 76px; }
.ml3 { margin-left: 3px; } .ml4 { margin-left: 4px; } .ml5 { margin-left: 5px; } .ml6 { margin-left: 6px; }
.ml7 { margin-left: 7px; } .ml8 { margin-left: 8px; } .ml9 { margin-left: 9px; } .ml10 { margin-left: 10px; } .ml37 { margin-left: 37px; }
.mt2 { margin-top: 2px; } .mt3 { margin-top: 3px; } .mt4 { margin-top: 4px; } .mt5 { margin-top: 5px; } .mt6 { margin-top: 6px; }
.mt7 { margin-top: 7px; } .mt8 { margin-top: 8px; } .mt9 { margin-top: 9px; } .mt10 { margin-top: 10px; } .mt11 { margin-top: 11px; }
.toggled { width: 73px; height: 24px; padding-left: 3px; gap: 4px; background: #f8f8f2; border: 1px solid #9aa6b8; border-radius: 3px; }
.selbtn { width: 50px; height: 22px; padding-left: 2px; background: #fff; border: 1px solid #c0c4cc; border-radius: 3px; }

.work { flex: 1; min-height: 0; display: flex; }
.nav { width: 194px; flex: none; margin-top: 2px; display: flex; flex-direction: column; }
.nav-title { height: 16px; flex: none; display: flex; align-items: center; background: #0a50d8; color: #fff; font-size: 13px; }
.nav-name { flex: 1; margin-left: -3px; }
.pin { width: 10px; height: 12px; flex: none; margin-right: 11px; color: #fff; }
.cl { width: 14px; margin-right: 4px; font: 13px/14px "DejaVu Sans", sans-serif; }
.navbtn { height: 22px; flex: none; padding: 0; border: 0; border-top: 1px solid #f8f6ec; border-bottom: 1px solid #aca899; background: #ece9d8; font: 12px/20px "Noto Sans CJK SC", sans-serif; color: #000; width: 194px; }
.nav-tools { height: 28px; flex: none; display: flex; align-items: center; gap: 7px; padding-left: 3px; }
.sq { width: 15px; height: 15px; background: #dce6f2; border: 1px solid #c8d4e4; color: #2a78c0; font: bold 15px/12px "DejaVu Sans", sans-serif; text-align: center; }
.tree { flex: 1; background: #fff; border-top: 1px solid #8a9aa8; border-right: 1px solid #8a9aa8; padding-top: 1px; }
.node { height: 16px; display: flex; align-items: center; padding-left: 7px; white-space: nowrap;
  background-image: repeating-linear-gradient(#a8a8a8 0 1px, transparent 1px 2px);
  background-size: 1px 100%; background-position: 11px 0; background-repeat: no-repeat; }
.lastr { background-size: 1px 8px; }
.exp { width: 9px; height: 9px; flex: none; margin-right: 5px; }
.node > span { margin-left: 5px; padding: 0 2px 0 0; }
.child { padding-left: 41px;
  background-image: repeating-linear-gradient(#a8a8a8 0 1px, transparent 1px 2px), repeating-linear-gradient(#a8a8a8 0 1px, transparent 1px 2px), repeating-linear-gradient(90deg, #a8a8a8 0 1px, transparent 1px 2px);
  background-size: 1px 100%, 1px 100%, 11px 1px; background-position: 11px 0, 30px 0, 30px 8px; background-repeat: no-repeat; }
.lastc { background-size: 1px 100%, 1px 8px, 11px 1px; }
.node.child > span { margin-left: 2px; padding: 0 2px; }
.sel > span { background: #ece9d8; }

.list { width: 262px; flex: none; margin: 2px 0 0 4px; display: flex; flex-direction: column; }
.list-title { height: 15px; flex: none; display: flex; align-items: center; border: 1px solid #aca899; border-radius: 2px; font-size: 13px; }
.list-name { flex: 1; }
.pin.dark { margin-right: 9px; color: #111; }
.cl.dark { color: #333; margin-right: 2px; }
.list-tools { height: 27px; flex: none; display: flex; align-items: center; padding-left: 5px; }
.searchrow { height: 24px; flex: none; display: flex; align-items: center; padding-left: 2px; }
.searchbox { width: 235px; height: 24px; background: #fff; border: 1px solid #a8b8c8; color: #8a8a8a; padding-left: 2px; line-height: 21px; font-size: 12px; }
.searchic { margin-left: 4px; }
.grid { flex: 1; margin: 3px 1px 0 2px; background: #fff; border: 1px solid #b8b6a8; padding: 1px 1px 0; }
.gh, .gr { display: flex; }
.gh { height: 20px; margin-bottom: 1px; }
.gr { height: 18px; }
.gn { width: 26px; flex: none; background: #f6f3e6; }
.gnum { background: #fbc77e; text-align: center; font: 12px/18px "Liberation Mono", monospace; }
.gt { flex: 1; text-align: center; color: #7a1020; line-height: 20px; background: linear-gradient(#f9dfa4, #f3bb60); }
.gc { flex: 1; background: #dfe8f3; padding-left: 19px; font: 11px/18px "Liberation Mono", monospace; }

.draw { flex: 1; min-width: 0; margin-left: 1px; display: flex; flex-direction: column; }
.stage { flex: 1; min-height: 0; display: flex; }
.vbar { width: 27px; flex: none; margin-left: 2px; padding-top: 10px; display: flex; flex-direction: column; align-items: center; overflow: hidden; background: #ece9d8; }
.hsep { width: 22px; height: 1px; flex: none; background: #c9c6b4; }
.vt { width: 12px; display: flex; flex-direction: column; align-items: center; gap: 3px; line-height: 12px; flex: none; text-align: center; }
.vt .ic { margin: 0 -2px; }
.lcaret { width: 0; height: 0; flex: none; border: 2.500px solid transparent; border-right: 3px solid #999; border-left: 0; }
.canvas { flex: 1; background: #000; overflow: hidden; }
.cad { display: block; font-family: "Open Sans", sans-serif; }
.band { fill: #6b9bd2; }
.axis { fill: none; stroke: #0f7a1e; stroke-width: 1; }
.grid-r { fill: none; stroke: #a3141c; stroke-width: 1; }
.wall { fill: none; stroke: #c49c98; stroke-width: 3.500; }
.wallr { fill: none; stroke: #d8282c; stroke-width: 1; }
.vwall { fill: none; stroke: #c9a8a0; stroke-width: 5; }
.vwallr { fill: none; stroke: #e02028; stroke-width: 1.500; }
.stub { fill: none; stroke: #d01018; }
.stubd { fill: none; stroke: #4a1030; }
.node-g { fill: #999; }
.lbl text { fill: #e8e8e8; font-size: 17px; text-anchor: middle; }
.lbl .dim { font-size: 18px; }
.yarrow { fill: #10e020; }
.ylab { fill: #18b030; font-size: 13px; }

/* ------ browser window ------ */
.browser { flex: 1; min-width: 0; height: 732px; display: flex; flex-direction: column; border-left: 3px solid #0a38b0; background: #fff; overflow: hidden; }
.b-menu { height: 32px; flex: none; display: flex; align-items: center; gap: 17px; padding: 3px 0 0 125px; background: #f2f2f2; border-top: 2px solid #333; color: #555; font-size: 12px; position: relative; white-space: nowrap; }
.chev { color: #888; font: 20px/20px "DejaVu Sans", sans-serif; width: 6px; margin-right: 0; }
.b-menu-end { position: absolute; right: -3px; top: 4px; width: 6px; height: 20px; border: 1px solid #bbb; }
.b-addr { height: 26px; flex: none; display: flex; align-items: center; background: #fff; border-top: 1px solid #ccc; border-bottom: 1px solid #ccc; }
.url { width: 246px; flex: none; margin-right: 7px; overflow: hidden; white-space: nowrap; color: #b0b0b0; font: 15px/24px "Liberation Sans", sans-serif; text-indent: -2px; }
.host { color: #333; }
.b-ic { flex: none; width: 16px; height: 16px; }
.qr { width: 13px; height: 13px; }
.bolt { width: 13px; height: 15px; margin-left: 9px; }
.vline { width: 1px; height: 24px; background: #ddd; margin-left: 6px; flex: none; }
.down { width: 13px; height: 8px; margin-left: 6px; }
.down + .vline { margin-left: 5px; }
.paw { margin-left: 6px; margin-right: 3px; }
.b-tools { height: 38px; flex: none; display: flex; align-items: center; background: #f2f2f2; white-space: nowrap; padding-left: 8px; color: #555; }
.dbl { font: 18px/18px "DejaVu Sans", sans-serif; color: #999; width: 16px; }
.dots { width: 3px; height: 14px; margin: 0 14px 0 7px; background: repeating-linear-gradient(#bbb 0 3px, transparent 3px 5px); flex: none; }
.bt { display: inline-flex; align-items: center; gap: 2px; width: 70px; flex: none; font-size: 12px; }
.bt .caret { margin-left: 10px; }
.aa { font: 8px "Liberation Sans", sans-serif; fill: #d86a60; }
.b-tabs { height: 27px; flex: none; display: flex; align-items: flex-end; background: #f2f2f2; border-bottom: 1px solid #bbb; position: relative; }
.tabx { width: 24px; padding-left: 2px; align-self: center; font: 15px/16px "DejaVu Sans", sans-serif; color: #999; }
.tab { width: 222px; height: 27px; margin-bottom: -1px; display: flex; align-items: center; background: #fff; border: 1px solid #bbb; border-bottom: 0; border-radius: 4px 4px 0 0; padding-left: 11px; }
.favicon { width: 16px; height: 16px; flex: none; }
.tabtext { width: 164px; flex: none; margin-left: 3px; overflow: hidden; white-space: nowrap; color: #222; }
.tabclose { margin-left: 5px; color: #999; font: 14px/16px "DejaVu Sans", sans-serif; }
.tabplus { width: 26px; text-align: center; align-self: center; font: bold 18px/18px "DejaVu Sans", sans-serif; color: #777; }
.tabsep { width: 1px; height: 26px; background: #ccc; }
.b-page { flex: 1; min-height: 0; overflow: hidden; background: #fff; }
.qlist { list-style: none; margin: 0; padding: 0; }
.q { height: 34px; display: flex; align-items: center; white-space: nowrap; padding-left: 1px; border-bottom: 1px dotted #c4c4c4; }
.qlast { height: 35px; border-bottom: 1px solid #ccc; }
.qm { width: 11px; height: 16px; flex: none; margin: -12px 9px 0 0; }
.q a { color: #1212b8; font-size: 14px; line-height: 20px; }
.coin { width: 11px; height: 11px; flex: none; margin: 0 0 0 8px; }
.pts { margin-left: 5px; color: #b56a6a; font: 12px/16px "Liberation Sans", sans-serif; }
.tag { margin-left: 8px; color: #222; font-size: 12px; }
.meta { height: 34px; padding: 9px 0 0 14px; color: #999; font-size: 12px; white-space: nowrap; }
.asker { color: #223a78; }
.bar { margin: 0 11px; color: #888; }
.body { margin: 3px 0 0 14px; font-size: 14px; line-height: 20px; white-space: nowrap; color: #222; }
.answer { margin: 39px 0 0 14px; height: 280px; width: 400px; background: #e4f0fb; border: 1px solid #b4c8e0; padding: 0 0 0 8px; }
.answer-head { height: 27px; display: flex; align-items: center; gap: 6px; padding-top: 5px; color: #333; }
.imgic { width: 14px; height: 12px; }
.answer-box { height: 246px; background: #fff; border: 1px solid #b4c8e0; padding: 6px 0 0 6px; color: #ccc; white-space: nowrap; overflow: hidden; }

.arrows { position: absolute; left: 0; top: 0; pointer-events: none; }
.arrows path { fill: none; stroke: #f01020; stroke-width: 3; }
.arrows polygon { fill: #f01020; }
```
